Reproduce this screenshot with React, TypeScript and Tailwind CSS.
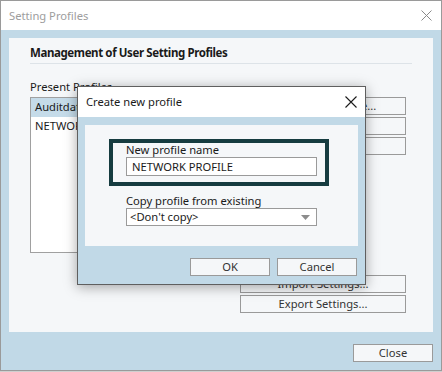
export default function App() {
    return (
        <div className="w-[442px] h-[372px] bg-[#cfcfcf] font-['Noto_Sans',sans-serif] text-[11.2px] text-[#1a1a1a]">
            <div className="relative w-[442px] h-[371px] border border-[#9a9a9a] bg-[#c1d9e7] flex flex-col">
                {/* window title */}
                <div className="h-[29px] bg-white flex items-center justify-between pl-2 pr-[9px] shrink-0">
                    <span className="text-[#9d9d9d] leading-none">Setting Profiles</span>
                    <svg width="11" height="11" viewBox="0 0 11 11" className="text-[#8a8a8a]">
                        <path d="M0.5 0.5 L10.5 10.5 M10.5 0.5 L0.5 10.5" stroke="currentColor" strokeWidth="1" />
                    </svg>
                </div>

                <div className="flex flex-col px-2 pt-2">
                    <div className="w-[424px] h-[294px] bg-[#f5f7f9] px-[21px] pt-[7px]">
                        <div className="font-bold text-[11.5px] tracking-[-0.4px] leading-[16px] pb-[2px] border-b border-[#dde3e8]">
                            Management of User Setting Profiles
                        </div>
                        <div className="mt-[15px] leading-[16px]">Present Profiles</div>
                        <div className="mt-[2px] flex gap-[18px]">
                            <div className="w-[192px] h-[156px] bg-white border border-[#a0a0a0] flex flex-col">
                                <div className="h-[19px] bg-[#c5dbe9] pl-1 flex items-center">Auditdata</div>
                                <div className="h-[19px] pl-1 flex items-center">NETWORK PROFILE</div>
                            </div>
                            <div className="w-[166px] flex flex-col gap-[2px]">
                                <Btn label="Create New Profile..." />
                                <Btn label="Rename" />
                                <Btn label="Delete" />
                                <div className="h-[116px]" />
                                <Btn label="Import Settings..." />
                                <Btn label="Export Settings..." />
                            </div>
                        </div>
                    </div>
                    <div className="flex justify-end mt-3">
                        <Btn label="Close" w="w-[80px]" />
                    </div>
                </div>

                {/* modal dialog */}
                <div className="absolute left-[76px] top-[85px] w-[289px] h-[199px] border border-[#5f5f5f] bg-[#c1d9e7] shadow-[0_2px_12px_rgba(0,0,0,0.35)] flex flex-col">
                    <div className="h-[30px] bg-white flex items-center justify-between pl-2 pr-[8px] shrink-0">
                        <span className="leading-none">Create new profile</span>
                        <svg width="12" height="12" viewBox="0 0 12 12" className="text-[#1a1a1a]">
                            <path d="M0.5 0.5 L11.5 11.5 M11.5 0.5 L0.5 11.5" stroke="currentColor" strokeWidth="1.1" />
                        </svg>
                    </div>
                    <div className="pl-[7px] pt-2">
                        <div className="w-[273px] h-[121px] bg-[#f5f7f9] pl-6 pt-[14px]">
                            <div className="w-[220px] h-[47px] border-4 border-[#163c40] pl-[13px]">
                                <div className="leading-[14px]">New profile name</div>
                                <div className="w-[191px] h-[19px] bg-white border border-[#9a9a9a] pl-[5px] flex items-center leading-none">
                                    NETWORK PROFILE
                                </div>
                            </div>
                            <div className="pl-[17px] mt-2">
                                <div className="leading-[14px]">Copy profile from existing</div>
                                <div className="w-[191px] h-[18px] bg-white border border-[#9a9a9a] pl-[3px] pr-[6px] flex items-center justify-between leading-none">
                                    <span>&lt;Don't copy&gt;</span>
                                    <svg width="9" height="5" viewBox="0 0 9 5">
                                        <path d="M0 0 L9 0 L4.5 5 Z" fill="#8c8c8c" />
                                    </svg>
                                </div>
                            </div>
                        </div>
                        <div className="flex justify-end gap-[7px] pr-[8px] mt-3">
                            <Btn label="OK" w="w-[80px]" />
                            <Btn label="Cancel" w="w-[80px]" />
                        </div>
                    </div>
                </div>
            </div>
        </div>
    )
}

function Btn({ label, w = "w-full" }: { label: string; w?: string }) {
    return (
        <div className={`${w} h-[18px] border border-[#9a9a9a] bg-[#f5f7f9] text-[#333] flex items-center justify-center leading-none`}>
            {label}
        </div>
    )
}
